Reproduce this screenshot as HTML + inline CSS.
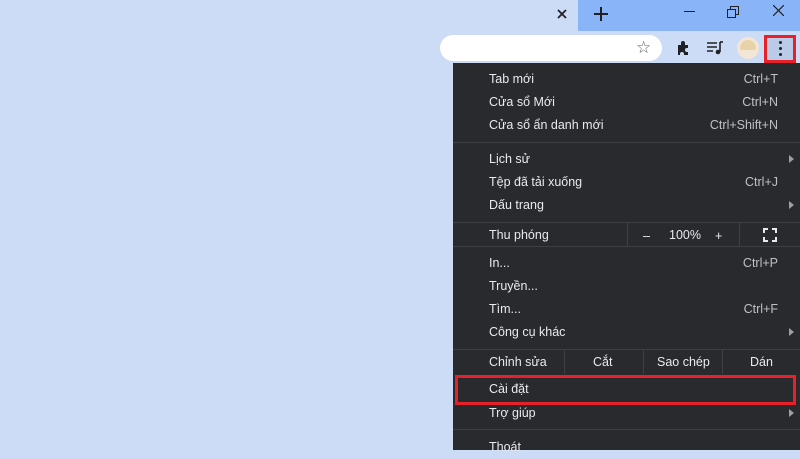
<!DOCTYPE html>
<html><head><style>
body{margin:0;width:800px;height:450px;overflow:hidden;background:#cddcf6;font-family:"Liberation Sans",Arial,sans-serif;position:relative}
.abs{position:absolute}
.menu{left:453px;top:63px;width:347px;height:387px;background:#292a2d;color:#e8eaed;font-size:12.5px}
.it{position:absolute;left:36px;height:23px;line-height:23px;white-space:nowrap}
.sc{position:absolute;right:22px;color:#bdc1c6;font-size:12.5px}
.ar{position:absolute;right:6px;width:0;height:0;border-left:5px solid #9aa0a6;border-top:4px solid transparent;border-bottom:4px solid transparent}
.sep{position:absolute;left:0;width:347px;height:1px;background:#3c4043}
.vs{position:absolute;width:1px;background:#3c4043}
</style></head><body>
<div class="abs" style="left:578px;top:0;width:222px;height:31px;background:#8ab4f8"></div>
<svg class="abs" style="left:557px;top:9px" width="10" height="10" viewBox="0 0 10 10"><path d="M1 1l8 8M9 1l-8 8" stroke="#202124" stroke-width="1.8"/></svg>
<svg class="abs" style="left:594px;top:7px" width="14" height="14" viewBox="0 0 14 14"><path d="M7 0v14M0 7h14" stroke="#202124" stroke-width="2"/></svg>
<div class="abs" style="left:684px;top:11px;width:11px;height:1px;background:#202124"></div>
<div class="abs" style="left:730px;top:6px;width:7px;height:7px;border:1px solid #202124"></div>
<div class="abs" style="left:727px;top:9px;width:7px;height:7px;border:1px solid #202124;background:#8ab4f8"></div>
<svg class="abs" style="left:773px;top:5px" width="11" height="11" viewBox="0 0 11 11"><path d="M0 0l11 11M11 0L0 11" stroke="#202124" stroke-width="1.2"/></svg>
<div class="abs" style="left:453px;top:31px;width:347px;height:32px;background:#cddcf6"></div>
<div class="abs" style="left:440px;top:35px;width:222px;height:26px;background:#fff;border-radius:13px"></div>
<div class="abs" style="left:636px;top:38px;font-size:17px;color:#5f6368">☆</div>
<svg class="abs" style="left:676px;top:40px" width="16" height="16" viewBox="0 0 16 16"><path d="M2 5h3V3a2 2 0 0 1 4 0v2h3v3h-1a2 2 0 0 0 0 4h1v3H8v-1a2 2 0 0 0-4 0v1H2z" fill="#202124"/></svg>
<svg class="abs" style="left:706px;top:40px" width="18" height="16" viewBox="0 0 18 16"><path d="M1 3h10M1 7h10M1 11h6" stroke="#202124" stroke-width="1.6"/><path d="M14 2v10" stroke="#202124" stroke-width="1.6"/><circle cx="12" cy="12" r="2.3" fill="#202124"/><path d="M14 2h3" stroke="#202124" stroke-width="1.6"/></svg>
<div class="abs" style="left:737px;top:37px;width:22px;height:22px;border-radius:50%;background:#f3e6d6;overflow:hidden"><div style="margin:3px 0 0 3px;width:16px;height:10px;background:#e8d2a8;border-radius:8px 8px 2px 2px"></div></div>
<div class="abs" style="left:764px;top:35px;width:32px;height:28px;box-sizing:border-box;border:3px solid #e8202a;background:#b9cbe6"></div>
<div class="abs" style="left:779px;top:41px;width:3px;height:3px;border-radius:50%;background:#202124;box-shadow:0 6px 0 #202124,0 12px 0 #202124"></div>
<div class="abs menu">
<div class="it" style="top:5px">Tab mới</div><div class="sc" style="top:9px">Ctrl+T</div>
<div class="it" style="top:28px">Cửa sổ Mới</div><div class="sc" style="top:32px">Ctrl+N</div>
<div class="it" style="top:51px">Cửa sổ ẩn danh mới</div><div class="sc" style="top:55px">Ctrl+Shift+N</div>
<div class="sep" style="top:79px"></div>
<div class="it" style="top:85px">Lịch sử</div><div class="ar" style="top:92px"></div>
<div class="it" style="top:108px">Tệp đã tải xuống</div><div class="sc" style="top:112px">Ctrl+J</div>
<div class="it" style="top:131px">Dấu trang</div><div class="ar" style="top:138px"></div>
<div class="sep" style="top:159px"></div>
<div class="it" style="top:161px">Thu phóng</div>
<div class="vs" style="left:174px;top:159px;height:24px"></div>
<div class="abs" style="left:190px;top:166px">–</div>
<div class="abs" style="left:216px;top:165px">100%</div>
<div class="abs" style="left:262px;top:166px">+</div>
<div class="vs" style="left:286px;top:159px;height:24px"></div>
<svg class="abs" style="left:310px;top:165px" width="14" height="14" viewBox="0 0 14 14"><path d="M1 5V1h4M9 1h4v4M13 9v4H9M5 13H1V9" stroke="#e8eaed" stroke-width="2" fill="none"/></svg>
<div class="sep" style="top:183px"></div>
<div class="it" style="top:189px">In...</div><div class="sc" style="top:193px">Ctrl+P</div>
<div class="it" style="top:212px">Truyền...</div>
<div class="it" style="top:235px">Tìm...</div><div class="sc" style="top:239px">Ctrl+F</div>
<div class="it" style="top:258px">Công cụ khác</div><div class="ar" style="top:265px"></div>
<div class="sep" style="top:286px"></div>
<div class="it" style="top:288px">Chỉnh sửa</div>
<div class="vs" style="left:111px;top:286px;height:25px"></div>
<div class="abs" style="left:140px;top:292px">Cắt</div>
<div class="vs" style="left:190px;top:286px;height:25px"></div>
<div class="abs" style="left:204px;top:292px">Sao chép</div>
<div class="vs" style="left:269px;top:286px;height:25px"></div>
<div class="abs" style="left:297px;top:292px">Dán</div>
<div class="abs" style="left:2px;top:312px;width:341px;height:30px;box-sizing:border-box;border:3px solid #e8202a"></div>
<div class="it" style="top:315px">Cài đặt</div>
<div class="it" style="top:339px">Trợ giúp</div><div class="ar" style="top:346px"></div>
<div class="sep" style="top:366px"></div>
<div class="it" style="top:373px">Thoát</div>
</div>
</body></html>
